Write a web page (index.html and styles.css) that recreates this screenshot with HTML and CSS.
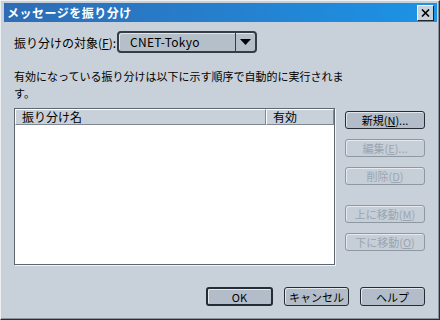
FILE: index.html
```html
<!DOCTYPE html>
<html>
<head>
    <meta charset="UTF-8">
    <title>メッセージを振り分け</title>
    <link rel="stylesheet" href="styles.css">
</head>
<body>
    <div class="window">
        <div class="titlebar">
            <span class="title">メッセージを振り分け</span>
            <span class="close">
                <svg width="9" height="8" viewBox="0 0 9 8"><path d="M1 0.5 L8 7.5 M8 0.5 L1 7.5" stroke="#000" stroke-width="1.6"/></svg>
            </span>
        </div>
        <div class="content">
            <div class="target-row">
                <span class="label">振り分けの対象(<u>F</u>):</span>
                <div class="combo">
                    <span class="combo-value">CNET-Tokyo</span>
                    <span class="combo-arrow">
                        <svg width="11" height="6" viewBox="0 0 11 6"><path d="M0 0 H11 L5.5 6 Z" fill="#000"/></svg>
                    </span>
                </div>
            </div>
            <p class="desc">有効になっている振り分けは以下に示す順序で自動的に実行されます。</p>
            <div class="main">
                <div class="list">
                    <div class="list-head">
                        <div class="col-name">振り分け名</div>
                        <div class="col-on">有効</div>
                    </div>
                </div>
                <div class="side">
                    <button class="btn">新規(<u>N</u>)...</button>
                    <button class="btn" disabled>編集(<u>E</u>)...</button>
                    <button class="btn" disabled>削除(<u>D</u>)</button>
                    <button class="btn spaced" disabled>上に移動(<u>M</u>)</button>
                    <button class="btn" disabled>下に移動(<u>O</u>)</button>
                </div>
            </div>
            <div class="footer">
                <button class="btn default">OK</button>
                <button class="btn wide">キャンセル</button>
                <button class="btn wide">ヘルプ</button>
            </div>
        </div>
    </div>
</body>
</html>
```

FILE: styles.css
```css
body {
    margin: 0;
    background: #c8d0d9;
    font-family: "Noto Sans CJK JP", "Noto Sans", sans-serif;
    font-size: 11px;
    color: #000;
}

.window {
    width: 440px;
    height: 320px;
    box-sizing: border-box;
    background: #c8d0d9;
    border: 1px solid;
    border-color: #eef1f4 #2a2e33 #2a2e33 #eef1f4;
    box-shadow: inset -1px -1px 0 #8a939c;
    padding: 2px 2px 2px 3px;
    display: flex;
    flex-direction: column;
}

.titlebar {
    height: 19px;
    background: linear-gradient(to right, #2f6cb5, #1c93e6);
    display: flex;
    align-items: center;
    justify-content: space-between;
    padding: 0 3px 0 3px;
}

.title {
    color: #fff;
    font-weight: bold;
    font-size: 12px;
    letter-spacing: 0.5px;
}

.close {
    width: 15px;
    height: 14px;
    background: #c8d0d9;
    border: 1px solid;
    border-color: #fff #202428 #202428 #fff;
    display: flex;
    align-items: center;
    justify-content: center;
}

.content {
    flex: 1;
    padding: 9px 12px 0 10px;
    display: flex;
    flex-direction: column;
}

.target-row {
    display: flex;
    align-items: center;
    height: 22px;
}

.label {
    width: 103px;
    font-size: 12px;
}

.combo {
    width: 140px;
    height: 22px;
    box-sizing: border-box;
    border: 2px solid #353c44;
    border-radius: 4px;
    background: #b5bfca;
    display: flex;
    box-shadow: inset 1px 1px 0 #dfe4ea;
}

.combo-value {
    flex: 1;
    padding-left: 11px;
    font-size: 12px;
    line-height: 18px;
    letter-spacing: 0.3px;
}

.combo-arrow {
    width: 19px;
    border-left: 1px solid #353c44;
    display: flex;
    align-items: center;
    justify-content: center;
}

.desc {
    margin: 15px 0 6px;
    width: 335px;
    line-height: 17px;
    font-size: 11px;
}

.main {
    display: flex;
}

.list {
    width: 323px;
    height: 157px;
    box-sizing: border-box;
    background: #fff;
    border: 1px solid;
    border-color: #5e666f #5e666f #5e666f #5e666f;
    box-shadow: 1px 1px 0 #f2f4f6;
}

.list-head {
    display: flex;
    height: 16px;
    background: #c8d0d9;
}

.list-head div {
    box-sizing: border-box;
    border: 1px solid;
    border-color: #fff #7f8891 #7f8891 #fff;
    line-height: 14px;
    padding-left: 6px;
    font-size: 12px;
}

.col-name {
    width: 251px;
}

.col-on {
    flex: 1;
}

.side {
    margin-left: 10px;
    padding-top: 3px;
    display: flex;
    flex-direction: column;
    gap: 10px;
}

.btn {
    width: 80px;
    height: 18px;
    padding: 0;
    font-family: inherit;
    font-size: 11px;
    line-height: 14px;
    color: #000;
    background: #b3bdc9;
    border: 1px solid #262c33;
    border-radius: 3px;
    box-shadow: inset 1px 1px 0 #e2e7ec;
}

.btn:disabled {
    color: #9ba5b0;
    background: #c6ced7;
    border-color: #8e98a2;
    box-shadow: inset 1px 1px 0 #e6eaee;
}

.btn.spaced {
    margin-top: 10px;
}

.footer {
    margin-top: 22px;
    display: flex;
    justify-content: flex-end;
    gap: 11px;
}

.footer .btn {
    height: 19px;
    width: 65px;
}

.footer .btn.default {
    width: 67px;
    border-width: 2px;
}
```
